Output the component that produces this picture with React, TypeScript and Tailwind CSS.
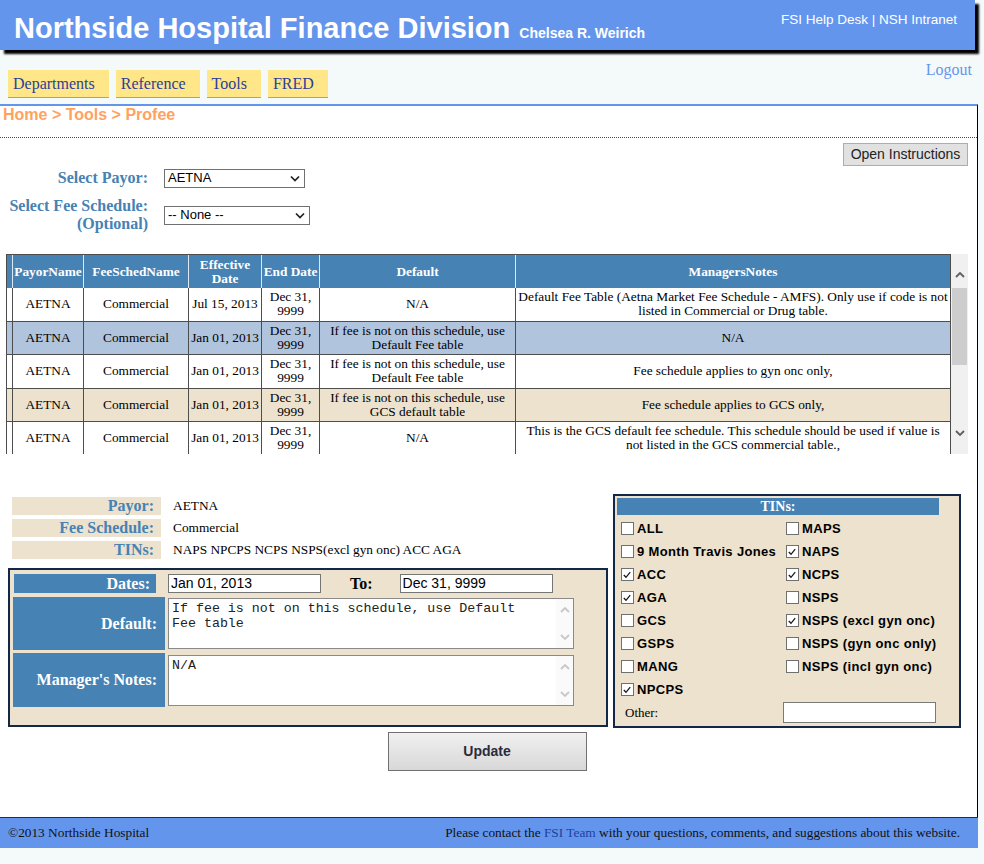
import React from 'react';

const serif = "font-['Liberation_Serif','Times_New_Roman',serif]";
const sans = "font-['Liberation_Sans',Arial,sans-serif]";
const mono = "font-['Liberation_Mono','Courier_New',monospace]";

const tabs = ['Departments', 'Reference', 'Tools', 'FRED'];

const rows = [
  {
    eff: 'Jul 15, 2013',
    def: 'N/A',
    notes: 'Default Fee Table (Aetna Market Fee Schedule - AMFS). Only use if code is not listed in Commercial or Drug table.',
    bg: 'bg-white',
  },
  {
    eff: 'Jan 01, 2013',
    def: 'If fee is not on this schedule, use Default Fee table',
    notes: 'N/A',
    bg: 'bg-[#b0c4de]',
  },
  {
    eff: 'Jan 01, 2013',
    def: 'If fee is not on this schedule, use Default Fee table',
    notes: 'Fee schedule applies to gyn onc only,',
    bg: 'bg-white',
  },
  {
    eff: 'Jan 01, 2013',
    def: 'If fee is not on this schedule, use GCS default table',
    notes: 'Fee schedule applies to GCS only,',
    bg: 'bg-[#ece2cd]',
  },
  {
    eff: 'Jan 01, 2013',
    def: 'N/A',
    notes: 'This is the GCS default fee schedule. This schedule should be used if value is not listed in the GCS commercial table.,',
    bg: 'bg-white',
  },
];

const tinsLeft: [string, boolean][] = [
  ['ALL', false],
  ['9 Month Travis Jones', false],
  ['ACC', true],
  ['AGA', true],
  ['GCS', false],
  ['GSPS', false],
  ['MANG', false],
  ['NPCPS', true],
];

const tinsRight: [string, boolean][] = [
  ['MAPS', false],
  ['NAPS', true],
  ['NCPS', true],
  ['NSPS', false],
  ['NSPS (excl gyn onc)', true],
  ['NSPS (gyn onc only)', false],
  ['NSPS (incl gyn onc)', false],
];

function Chevron({ up, color = '#5f5f5f' }: { up?: boolean; color?: string }) {
  return (
    <svg width="10" height="6" viewBox="0 0 10 6">
      <path d={up ? 'M1 5 L5 1 L9 5' : 'M1 1 L5 5 L9 1'} stroke={color} strokeWidth="1.8" fill="none" />
    </svg>
  );
}

function FakeSelect({ width, text }: { width: string; text: string }) {
  return (
    <div className={`${width} h-[19px] border border-[#707070] bg-white flex items-center justify-between pl-[3px] pr-[4px] ${sans} text-[13px] text-black`}>
      <span>{text}</span>
      <svg width="10" height="7" viewBox="0 0 10 7">
        <path d="M1 1.5 L5 5.5 L9 1.5" stroke="#222" strokeWidth="1.7" fill="none" />
      </svg>
    </div>
  );
}

function FakeTextarea({ text }: { text: string }) {
  return (
    <div className="w-[406px] h-[51px] border border-[#8a8a8a] bg-white flex">
      <div className={`flex-1 pl-[3px] pt-[2px] ${mono} text-[13.3px] leading-[15px] text-[#222] whitespace-pre-wrap`}>{text}</div>
      <div className="w-[17px] bg-[#fafafa] flex flex-col items-center justify-between py-[8px]">
        <Chevron up color="#c8c8c8" />
        <Chevron color="#c8c8c8" />
      </div>
    </div>
  );
}

function Check({ checked }: { checked: boolean }) {
  return (
    <span className="w-[13px] h-[13px] border border-[#707070] bg-white flex items-center justify-start pl-[1px] shrink-0">
      {checked && (
        <svg width="8" height="8" viewBox="0 0 8 8">
          <path d="M0.8 4 L3 6.3 L7.2 1.2" stroke="#1a1a1a" strokeWidth="1.3" fill="none" />
        </svg>
      )}
    </span>
  );
}

function TinItem({ label, checked }: { label: string; checked: boolean }) {
  return (
    <div className="h-[23px] flex items-center">
      <Check checked={checked} />
      <span className={`ml-[3px] ${sans} text-[13px] tracking-[0.35px] font-bold text-black`}>{label}</span>
    </div>
  );
}

export default function App() {
  return (
    <div className={`min-h-screen w-full bg-[#f4fafa] ${serif}`}>
      {/* Header */}
      <header className="relative z-10 w-[975px] h-[50px] bg-[#6495ed] shadow-[4px_4px_2px_#000] flex justify-between pl-[14px] pr-[18px]">
        <div className="flex items-baseline pt-[14px]">
          <span className={`${sans} text-[29px] leading-[29px] font-bold text-white`}>Northside Hospital Finance Division</span>
          <span className={`${sans} text-[14px] font-bold text-white ml-[9px]`}>Chelsea R. Weirich</span>
        </div>
        <div className={`${sans} text-[13.5px] text-white pt-[10px]`}>FSI Help Desk | NSH Intranet</div>
      </header>

      {/* Nav */}
      <nav className="w-[978px] h-[54px] flex justify-between pl-[8px] pr-[6px]">
        <div className="flex gap-[7px] pt-[20px]">
          {tabs.map((t) => (
            <div key={t} className="h-[28px] bg-[#ffe689] border-b border-[#7fa6e8] pl-[5px] pr-[14px] flex items-center text-[16px] text-[#2c3e97]">
              {t}
            </div>
          ))}
        </div>
        <div className="pt-[11px] text-[16px] leading-[18px] text-[#6495ed]">Logout</div>
      </nav>

      {/* Main Content */}
      <main className="w-[978px] bg-white border-t-2 border-[#6495ed] border-r border-r-black pb-[46px]">
        <div className={`${sans} h-[32px] pl-[3px] text-[16px] leading-[18px] font-bold text-[#ffa25f] border-b border-dotted border-[#2a4a9a]`}>
          Home &gt; Tools &gt; Profee
        </div>

        <div className="flex justify-end pr-[9px] pt-[5px]">
          <button className={`${sans} w-[125px] h-[23px] bg-[#e1e1e1] border border-[#adadad] text-[14px] text-[#222]`}>
            Open Instructions
          </button>
        </div>

        {/* Selectors */}
        <div className="mt-[3px] flex flex-col gap-[10px]">
          <div className="flex items-center gap-[16px] h-[18px]">
            <span className="w-[148px] text-right text-[16px] leading-[18px] font-bold text-[#4682b4]">Select Payor:</span>
            <FakeSelect width="w-[141px]" text="AETNA" />
          </div>
          <div className="flex items-center gap-[16px]">
            <span className="w-[148px] text-right text-[16px] leading-[18px] font-bold text-[#4682b4]">
              Select Fee Schedule:
              <br />
              (Optional)
            </span>
            <FakeSelect width="w-[146px]" text="-- None --" />
          </div>
        </div>

        {/* Fee schedule table */}
        <div className="mt-[21px] ml-[6px] flex h-[200px]">
          <div className="w-[945px] h-[200px] overflow-hidden">
            <table className="table-fixed w-[945px] border-separate border-spacing-0 border-t border-l border-[#4d4d4d] text-[13.33px] leading-[14px]">
              <colgroup>
                <col className="w-[6px]" />
                <col className="w-[71px]" />
                <col className="w-[105px]" />
                <col className="w-[73px]" />
                <col className="w-[58px]" />
                <col className="w-[196px]" />
                <col className="w-[435px]" />
              </colgroup>
              <thead>
                <tr className="h-[33px] bg-[#4682b4] text-white font-bold">
                  <th className="border-r border-[#dfe8f2]"></th>
                  <th className="border-r border-[#dfe8f2]">PayorName</th>
                  <th className="border-r border-[#dfe8f2]">FeeSchedName</th>
                  <th className="border-r border-[#dfe8f2]">Effective Date</th>
                  <th className="border-r border-[#dfe8f2]">End Date</th>
                  <th className="border-r border-[#dfe8f2]">Default</th>
                  <th className="border-r border-[#4d4d4d]">ManagersNotes</th>
                </tr>
              </thead>
              <tbody>
                {rows.map((r, i) => (
                  <tr key={i} className={`h-[33.5px] ${r.bg} text-black text-center`}>
                    <td className="border-r border-b border-[#4d4d4d]"></td>
                    <td className="border-r border-b border-[#4d4d4d]">AETNA</td>
                    <td className="border-r border-b border-[#4d4d4d]">Commercial</td>
                    <td className="border-r border-b border-[#4d4d4d] whitespace-nowrap">{r.eff}</td>
                    <td className="border-r border-b border-[#4d4d4d]">Dec 31, 9999</td>
                    <td className="border-r border-b border-[#4d4d4d] px-[1px]">{r.def}</td>
                    <td className="border-r border-b border-[#4d4d4d] px-[1px]">{r.notes}</td>
                  </tr>
                ))}
              </tbody>
            </table>
          </div>
          <div className="w-[17px] h-[200px] bg-[#f0f0f0] flex flex-col items-center">
            <div className="h-[34px] flex items-center justify-center pt-[8px]">
              <Chevron up />
            </div>
            <div className="w-[15px] h-[77px] bg-[#cdcdcd]" />
            <div className="flex-1" />
            <div className="h-[34px] flex items-center justify-center pb-[9px]">
              <Chevron />
            </div>
          </div>
        </div>

        {/* Detail / edit area */}
        <div className="mt-[40px] pl-[8px] flex items-start gap-[5px]">
          <div className="w-[600px] pt-[3px]">
            <div className="flex flex-col gap-[4px]">
              {[
                ['Payor:', 'AETNA'],
                ['Fee Schedule:', 'Commercial'],
                ['TINs:', 'NAPS NPCPS NCPS NSPS(excl gyn onc) ACC AGA'],
              ].map(([k, v]) => (
                <div key={k} className="flex items-center h-[18px]">
                  <span className="ml-[4px] w-[149px] h-[18px] bg-[#ece2cd] text-right pr-[7px] text-[16px] leading-[18px] font-bold text-[#4682b4]">{k}</span>
                  <span className="ml-[12px] text-[13.33px] text-black">{v}</span>
                </div>
              ))}
            </div>

            <div className="mt-[9px] w-[600px] h-[159px] border-2 border-[#132846] bg-[#ece2cd] pt-[4px] flex flex-col gap-[4px]">
              <div className="flex items-center h-[19px]">
                <span className="ml-[4px] w-[142px] h-[19px] bg-[#4682b4] text-right pr-[6px] text-[16px] leading-[19px] font-bold text-white">Dates:</span>
                <div className={`ml-[12px] w-[153px] h-[19px] border border-[#767676] bg-white px-[2px] ${sans} text-[14px] leading-[17px] text-black`}>Jan 01, 2013</div>
                <span className="ml-[29px] text-[16px] leading-[19px] font-bold text-black">To:</span>
                <div className={`ml-[27px] w-[153px] h-[19px] border border-[#767676] bg-white px-[2px] ${sans} text-[14px] leading-[17px] text-black`}>Dec 31, 9999</div>
              </div>
              <div className="flex items-center">
                <span className="ml-[3px] w-[152px] h-[53px] bg-[#4682b4] flex items-center justify-end pr-[8px] text-[16px] font-bold text-white">Default:</span>
                <div className="ml-[3px]">
                  <FakeTextarea text={'If fee is not on this schedule, use Default\nFee table'} />
                </div>
              </div>
              <div className="flex items-center -mt-[1px]">
                <span className="ml-[3px] w-[152px] h-[54px] bg-[#4682b4] flex items-center justify-end pr-[8px] text-[16px] font-bold text-white">Manager's Notes:</span>
                <div className="ml-[3px]">
                  <FakeTextarea text="N/A" />
                </div>
              </div>
            </div>
          </div>

          {/* TINs */}
          <div className="w-[348px] h-[234px] border-2 border-[#132846] bg-[#ece2cd] pt-[2px] pl-[2px]">
            <div className="w-[322px] h-[17px] bg-[#4682b4] text-center text-[14px] leading-[17px] font-bold text-white">TINs:</div>
            <div className="mt-[2px] pl-[4px] flex">
              <div className="w-[165px] flex flex-col">
                {tinsLeft.map(([l, c]) => (
                  <TinItem key={l} label={l} checked={c} />
                ))}
              </div>
              <div className="flex flex-col">
                {tinsRight.map(([l, c]) => (
                  <TinItem key={l} label={l} checked={c} />
                ))}
              </div>
            </div>
            <div className="mt-[1px] flex items-center">
              <span className="ml-[8px] w-[158px] text-[13px] text-black">Other:</span>
              <div className="w-[153px] h-[21px] border border-[#7a7a7a] bg-white" />
            </div>
          </div>
        </div>

        <div className="mt-[4px] flex justify-center pr-[3px]">
          <button className={`${sans} w-[199px] h-[39px] bg-gradient-to-b from-[#f0f0f0] to-[#d8d8d8] border border-[#707070] text-[14px] font-bold text-[#2b2b3b]`}>
            Update
          </button>
        </div>
      </main>

      {/* Footer */}
      <footer className="w-[978px] h-[31px] bg-[#6495ed] border-t border-[#1b2f55] flex items-center justify-between pl-[8px] pr-[18px] text-[13.33px] text-[#111]">
        <span>&copy;2013 Northside Hospital</span>
        <span>
          Please contact the <span className="text-[#1f3f9f]">FSI Team</span> with your questions, comments, and suggestions about this website.
        </span>
      </footer>
    </div>
  );
}
